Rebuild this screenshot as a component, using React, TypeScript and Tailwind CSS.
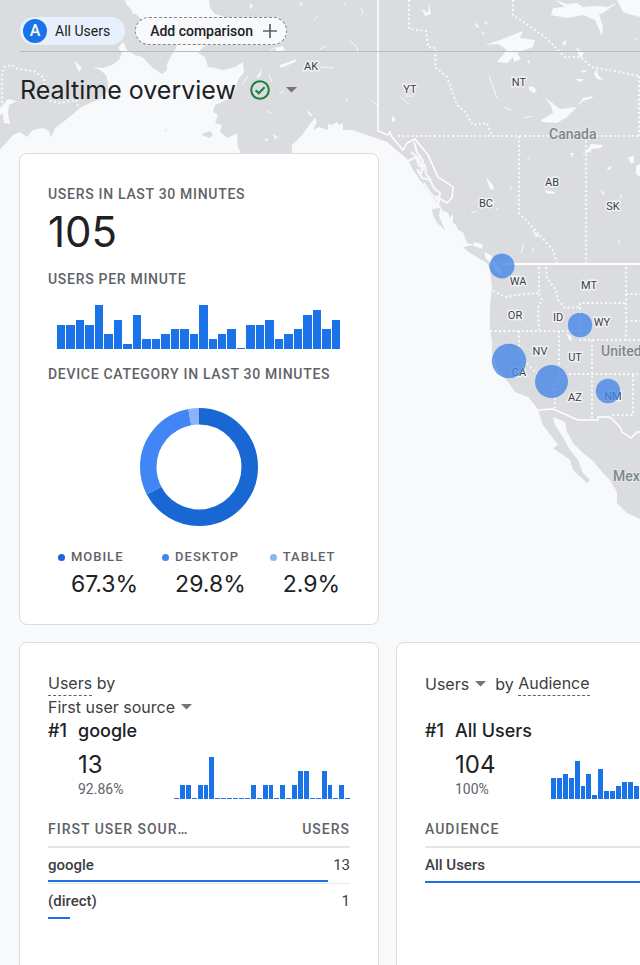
import React from "react";

const usersPerMinute = [5, 5, 6, 5, 9, 3, 6, 1, 7, 2, 2, 3, 4, 4, 3, 9, 2, 3, 4, 0, 5, 5, 6, 2, 3, 4, 7, 8, 4, 6];
const googlePerMinute = [0, 1, 1, 0, 1, 1, 3, 0, 0, 0, 0, 0, 0, 1, 0, 1, 1, 0, 1, 0, 1, 2, 2, 0, 0, 2, 1, 0, 1, 0];

const regions: [string, number, number][] = [
  ["AK", 311, 70], ["YT", 410, 93], ["NT", 519, 86], ["AB", 552, 186], ["SK", 613, 210],
  ["BC", 486, 207], ["WA", 518, 285], ["MT", 589, 289], ["OR", 515, 319], ["ID", 558, 321],
  ["WY", 602, 326], ["NV", 540, 355], ["UT", 575, 361], ["CA", 519, 376], ["AZ", 575, 401], ["NM", 613, 400],
];

const countries: [string, number, number][] = [
  ["Canada", 549, 139], ["United", 601, 356], ["Mexico", 613, 481],
];

const activity: [number, number, number][] = [
  [502, 266, 12.5], [580, 325, 12.2], [509, 361, 17.2], [551.5, 381.5, 16.5], [608, 391, 12.2],
];

const provinceLines = [
  "M398 136H640", "M409 0V29L426 31L428 47L436 48L435 67L447 77L457 105L465 112L473 125L487 123L492 136",
  "M513 0V15L545 37L565 57H580L592 67L640 76", "M639 76V136", "M586 136V263",
  "M519 136V213L535 230L553 250L557 263", "M539 267V293L542 300L538 308L539 331",
  "M493 291L505 297L525 294L540 293", "M546 267L547 278L556 290L558 300L565 308L579 307L580 303H626",
  "M626 267V340", "M626 294H640", "M626 321H640", "M580 303V340H640", "M490 331H580", "M519 331V356L556 392",
  "M559 331V375L555 385V408", "M592 340V418", "M560 374H640", "M633 375V415H610",
  "M2 103V76L4 67L12 65L18 69L34 71L44 78L45 88L50 101L60 103L76 100L79 110",
];

const lakes = [
  "M485 45L500 40L523 31L520 38L535 40L533 47L517 53L521 59L514 62L513 57L507 63L497 62L507 50L498 44Z",
  "M545 97L560 109L577 107L583 98L593 96L592 98L583 101L567 117L557 123L542 122L541 120L553 113L551 106Z",
  "M555 0L567 4L577 3L583 7L598 6L607 7L617 3L603 13L599 14L603 27L602 36L595 20L583 15L567 18L551 15L553 8L565 7Z",
  "M617 0H640V17L629 14L623 12Z",
  "M583 155L589 148L591 144L603 145L601 148L592 149L590 152L582 154Z",
  "M628 158L634 155L634 162L631 164Z", "M636 166L640 164V177L636 174Z", "M607 168L611 166L611 169L608 170Z",
  "M570 153L574 153L572 158Z", "M529 86L534 87L537 91L534 93L529 90Z", "M392 116L395 118L395 122L392 121Z",
  "M486 177L493 185L494 190L490 189Z", "M484 252L491 255L495 262L501 270L503 275L496 272L493 265L486 259Z",
  "M474 242L482 244L483 249L473 246Z", "M566 333L571 336L572 341L569 340Z",
  "M422 9L428 13L429 3L431 14L425 16Z", "M576 47L584 53L581 58L578 54Z", "M580 71L588 70L584 73Z",
  "M575 79L584 79L581 82Z", "M597 68L598 75L604 80L597 79L594 74Z", "M562 43L567 39L565 46Z",
  "M474 22L479 26L477 28Z", "M484 21L488 23L486 25Z", "M482 31L485 34L483 35Z", "M477 31L480 34Z",
  "M527 60L530 61L529 64Z", "M634 38L638 40L637 41Z", "M618 240L620 241L620 245Z", "M620 195L622 195L621 200Z",
  "M600 189L605 194L603 195Z", "M545 190L555 192L555 194L546 193Z", "M532 230L540 236L536 237Z",
  "M529 157L530 158L526 161Z", "M0 108L8 99L17 101L9 105L8 113L10 124L4 123L3 114L0 115Z",
  "M8 150L14 147L13 151L7 153Z", "M74 60L82 68L79 72Z", "M250 3L253 6L250 10Z", "M344 2L346 4L345 5Z",
  "M280 65L297 59L295 62L281 68Z", "M256 78L262 69L260 77Z", "M275 48L283 46L285 50L276 52Z", "M265 138L269 140L265 141Z",
  "M273 134L278 137L275 139Z", "M306 110L312 114L311 117Z", "M267 110L273 114L269 113Z", "M299 5L303 1L301 6Z",
];

const rivers = [
  "M361 8L363 13L361 15", "M349 40L357 47L358 53", "M320 49L326 46", "M320 67L334 68",
  "M346 98L348 102", "M400 97L409 104", "M405 96H413", "M489 76L497 98", "M524 118L532 116", "M504 107L511 110",
  "M372 101L377 105", "M533 247V253", "M521 253L524 244", "M510 190L512 186", "M471 213L477 211",
  "M314 20L318 16", "M270 51L276 47", "M242 84L248 76", "M279 94L284 91", "M269 75L272 82", "M496 210L498 208",
];

const islandChannels = [
  "M408 161L416 157L419 166L425 165L426 174L431 180", "M414 142L417 152L423 161L421 174", "M417 169L422 178L430 180L434 188L440 193L438 204",
  "M424 183L431 194L440 202", "M411 152L418 158L424 170", "M436 196L447 203",
];

function RegionMap() {
  return (
    <svg
      className="absolute inset-x-0 top-0 h-[530px] w-full"
      viewBox="0 0 640 530"
      preserveAspectRatio="xMinYMin slice"
      role="img"
      aria-label="Map of active users"
    >
      <rect width="640" height="530" fill="#dadce0" />
      <g fill="#f8f9fb">
        <path d="M0 149L7 142L13 135L20 132L27 137L33 130L43 128L49 131L51 137L53 133L55 128L63 122L72 115L80 108L90 103L100 99L108 90V82L106 75L100 70L93 67L103 68L112 65L119 60L122 53L118 48L123 42L127 50L135 55L142 57L147 62L153 68L162 74L167 70V64L170 58L175 50L178 42L150 32L140 18L136 14L133 14L131 9L126 4L125 0H209L210 8L215 14L228 18L222 36L203 47L198 53L205 57L208 67L215 68L223 70L235 67L243 62L244 72L238 80L235 90L232 97L222 102L215 105L213 112L218 115L215 123L222 125L220 132L228 138L237 133L238 147L242 155H292L292 145L303 134L307 128L315 118L317 122L313 130L319 127L328 130L328 124L332 125L337 122L339 125L343 123L343 130L353 130L361 133L370 136L387 142L400 153L408 160L413 170L420 180L425 187L433 198L440 205L442 210L448 213L450 218L453 214L453 223L456 225L458 230L463 232L467 243L474 245L463 247L470 253L487 263L490 270L492 287L490 307V330L492 340V353L498 370L508 382L515 392L528 397L535 405L538 410L543 425L552 437L558 445L553 448L570 460L573 470L587 483L590 480L583 473L578 460L570 450L563 437L555 425L553 417L565 422L567 432L573 443L583 453L592 460L603 473L610 480L617 492V503L627 513L640 519V530H0Z" />
        {lakes.map((d) => <path key={d} d={d} />)}
      </g>
      <g fill="#dadce0">
        <path d="M202 134L210 131L213 135L210 138L204 136Z" />
        <path d="M432 209L440 208L439 216L445 230L437 223L433 215Z" />
        <path d="M165 129L167 131L165 131Z" />
      </g>
      <g fill="none" stroke="#f8f9fb">
        <g strokeWidth="1">{rivers.map((d) => <path key={d} d={d} />)}</g>
        <g strokeWidth="2">{islandChannels.map((d) => <path key={d} d={d} />)}</g>
        <g strokeWidth="2" strokeDasharray="2 2.5">{provinceLines.map((d) => <path key={d} d={d} />)}</g>
        <path stroke="#fff" strokeWidth="1.5" d="M378 0V131L388 135L390 132L392 137L403 150L407 143L415 139L428 155L438 177L453 187L452 198L447 203M538 410L553 409L578 420H598V417H610L620 427L622 432L631 438L637 432H640" />
        <path stroke="#fff" strokeWidth="2" d="M500 264H640" />
      </g>
      <g className="font-['Roboto',sans-serif] text-[11px]" fill="#3c4043" stroke="#f1f3f4" strokeWidth="3" strokeLinejoin="round" paintOrder="stroke" textAnchor="middle">
        {regions.map(([name, x, y]) => <text key={name} x={x} y={y}>{name}</text>)}
      </g>
      <g className="font-['Roboto',sans-serif] text-[14px] font-medium" fill="#80868b" stroke="#e4e6e8" strokeWidth="2" paintOrder="stroke">
        {countries.map(([name, x, y]) => <text key={name} x={x} y={y}>{name}</text>)}
      </g>
      <g fill="#4285e6" fillOpacity="0.78">
        {activity.map(([x, y, r]) => <circle key={`${x}-${y}`} cx={x} cy={y} r={r} />)}
      </g>
    </svg>
  );
}

function Bars({ values, max, className }: { values: number[]; max: number; className: string }) {
  return (
    <div className={`flex items-end gap-px ${className}`}>
      {values.map((v, i) => (
        <span key={i} className="min-h-px flex-1 bg-[#1a73e8]" style={{ height: `${(v / max) * 100}%` }} />
      ))}
    </div>
  );
}

function Caret() {
  return (
    <svg className="h-[6px] w-[11px]" viewBox="0 0 11 6" fill="#757575" aria-hidden="true">
      <path d="M0 0H11L5.5 5.6Z" />
    </svg>
  );
}

const devices = [
  { name: "Mobile", share: 67.3, dot: "bg-[#1967d2]", color: "#1967d2" },
  { name: "Desktop", share: 29.8, dot: "bg-[#4285f4]", color: "#4285f4" },
  { name: "Tablet", share: 2.9, dot: "bg-[#8ab4f8]", color: "#8ab4f8" },
];

function DeviceDonut() {
  let start = 0;
  return (
    <svg className="mx-auto mt-6 size-[118px]" viewBox="0 0 118 118" role="img" aria-label="Device category">
      <g transform="rotate(-90 59 59)" fill="none" strokeWidth="16.5">
        {devices.map((d) => {
          const offset = -start;
          start += d.share;
          return <circle key={d.name} cx="59" cy="59" r="50.75" pathLength="100" stroke={d.color} strokeDasharray={`${d.share} ${100 - d.share}`} strokeDashoffset={offset} />;
        })}
      </g>
    </svg>
  );
}

const card = "rounded-lg border border-[#dadce0] bg-white px-7";
const caption = "text-sm leading-5 font-medium tracking-[0.7px] text-[#5f6368] uppercase";
const display = "font-['Inter',sans-serif]";

type Row = { name: string; users?: number; share: number };

function RankCard(props: {
  heading: React.ReactNode; top: string; count: string; share: string; values: number[]; max: number; chart: string;
  column: string; measure?: string; rows: Row[];
}) {
  return (
    <section className={`${card} h-[440px] pt-7`}>
      <div className={`${display} h-[48px] text-base leading-6 text-[#3c4043]`}>{props.heading}</div>
      <div className={`${display} flex gap-2 text-lg leading-6 font-medium text-[#202124]`}>
        <span className="w-[22px] whitespace-nowrap">#1</span>
        <h2>{props.top}</h2>
      </div>
      <div className="flex h-[56px] items-end justify-between pl-[30px]">
        <div>
          <p className={`${display} text-2xl leading-7 text-[#202124]`}>{props.count}</p>
          <p className="text-sm leading-5 text-[#5f6368]">{props.share}</p>
        </div>
        <Bars values={props.values} max={props.max} className={`w-[176px] ${props.chart}`} />
      </div>
      <table className="mt-3 w-full table-fixed text-[15px] text-[#3c4043]">
        <thead>
          <tr className={`${caption} h-[36px] border-b-2 border-[#e4e6e9]`}>
            <th className="w-[145px] truncate text-left font-medium tracking-[1px]">{props.column}</th>
            <th className="text-right font-medium tracking-[1px]">{props.measure}</th>
          </tr>
        </thead>
        <tbody>
          {props.rows.map((r) => (
            <tr key={r.name} className="relative h-[36px] border-b border-[#e8eaed] last:border-b-0">
              <td className="font-medium">
                {r.name}
                <span className="absolute bottom-0 left-0 h-[2px] bg-[#1a73e8]" style={{ width: `${r.share}%` }} />
              </td>
              <td className="text-right">{r.users}</td>
            </tr>
          ))}
        </tbody>
      </table>
    </section>
  );
}

export default function App() {
  return (
    <div className="relative h-screen overflow-hidden bg-[#f8f9fb] font-['Roboto',sans-serif] text-[#202124]">
      <RegionMap />
      <div className="relative">
        <header className="ml-5 flex h-[52px] items-end gap-[10px] border-b border-[#b8babe] pb-[6px]">
          <button className="flex h-[28px] items-center gap-2 rounded-full bg-[#e8f0fe] pr-[15px] pl-[3px] text-sm">
            <span className="flex size-6 items-center justify-center rounded-full bg-[#1a73e8] text-base font-medium text-white">A</span>
            All Users
          </button>
          <button className="flex h-[28px] items-center gap-[10px] rounded-full border border-dashed border-[#80868b] bg-[#f8f9fb] pr-[9px] pl-[14px] text-sm font-medium">
            Add comparison
            <svg className="size-[14px]" viewBox="0 0 14 14" stroke="#5f6368" strokeWidth="1.7" aria-hidden="true">
              <path d="M7 0V14M0 7H14" />
            </svg>
          </button>
        </header>

        <div className="ml-5 flex h-[76px] items-center text-[#202124]">
          <h1 className={`${display} text-[25px] leading-8`}>Realtime overview</h1>
          <button className="ml-[14px] flex items-center gap-4" aria-label="Report status">
            <svg className="size-5" viewBox="0 0 20 20" fill="none" stroke="#188038" strokeWidth="2" aria-hidden="true">
              <circle cx="10" cy="10" r="8.8" />
              <path d="M5.6 10.3L8.7 13.3L14.6 7.2" />
            </svg>
            <Caret />
          </button>
        </div>

        <main className="mt-[25px] ml-[19px] flex w-[737px] flex-col gap-[17px]">
          <section className={`${card} w-[360px] pt-[30px] pb-[23px]`}>
            <h2 className={caption}>Users in last 30 minutes</h2>
            <p className={`${display} mt-1 text-[42px] leading-[48px]`}>105</p>
            <h3 className={`${caption} mt-[13px]`}>Users per minute</h3>
            <Bars values={usersPerMinute} max={9} className="mx-[9px] mt-4 mr-[10px] h-[44px]" />
            <h3 className={`${caption} mt-[15px] whitespace-nowrap`}>Device category in last 30 minutes</h3>
            <DeviceDonut />
            <dl className="mt-[21px] flex justify-center gap-6">
              {devices.map((d) => (
                <div key={d.name} className="grid grid-cols-[7px_auto] items-center gap-x-[6px]">
                  <dt className="contents">
                    <span className={`size-[7px] rounded-full ${d.dot}`} />
                    <span className="text-[13px] leading-5 font-medium tracking-[1px] text-[#5f6368] uppercase">{d.name}</span>
                  </dt>
                  <dd className={`${display} col-start-2 text-[23px] leading-[34px]`}>{d.share}%</dd>
                </div>
              ))}
            </dl>
          </section>

          <div className="grid grid-cols-2 gap-[17px]">
            <RankCard
              heading={
                <>
                  <p><span className="border-b border-dashed border-[#5f6368] pb-[2px]">Users</span> by</p>
                  <button className="flex items-center gap-[6px]">First user source <Caret /></button>
                </>
              }
              top="google" count="13" share="92.86%" values={googlePerMinute} max={3} chart="h-[42px]"
              column="First user source" measure="Users"
              rows={[{ name: "google", users: 13, share: 92.86 }, { name: "(direct)", users: 1, share: 7.14 }]}
            />
            <RankCard
              heading={
                <p className="flex items-center">
                  <button className="mr-[9px] flex items-center gap-[6px]">Users <Caret /></button>
                  by&nbsp;<span className="border-b border-dashed border-[#5f6368]">Audience</span>
                </p>
              }
              top="All Users" count="104" share="100%" values={usersPerMinute} max={9} chart="h-[38px]"
              column="Audience"
              rows={[{ name: "All Users", share: 100 }]}
            />
          </div>
        </main>
      </div>
    </div>
  );
}
